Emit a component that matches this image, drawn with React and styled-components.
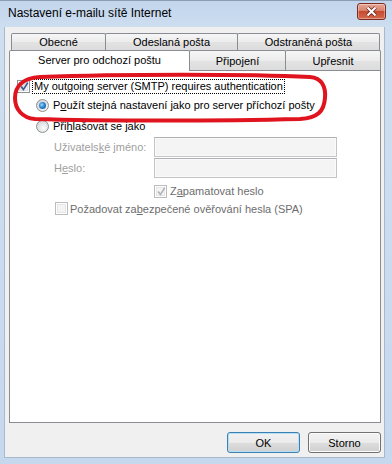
import React from "react";
import styled, { createGlobalStyle } from "styled-components";

const Global = createGlobalStyle`
  html, body {
    margin: 0;
    padding: 0;
  }
  body {
    width: 392px;
    height: 464px;
    overflow: hidden;
    font-family: "Liberation Sans", Arial, sans-serif;
    font-size: 11px;
    color: #000;
  }
`;

const Window = styled.div`
  position: relative;
  width: 392px;
  height: 464px;
  box-sizing: border-box;
  padding: 0 7px 6px 4px;
  display: flex;
  flex-direction: column;
  background: linear-gradient(#c2d5ec, #cfdff1 30px, #c6d8ee);
  border-top: 1px solid #8a9db5;
`;

const TitleBar = styled.div`
  height: 26px;
  display: flex;
  align-items: center;
  justify-content: space-between;
  padding: 0 0 0 4px;
`;

const Title = styled.span`
  font-size: 12px;
  margin-top: -2px;
`;

const CloseButton = styled.div`
  width: 29px;
  height: 17px;
  margin: -5px -1px 0 0;
  box-sizing: border-box;
  border: 1px solid #7a2b22;
  border-radius: 3px;
  background: linear-gradient(#e7a999, #d98069 45%, #c64a30 50%, #d46b4d);
  box-shadow: inset 0 0 0 1px rgba(255, 255, 255, 0.35);
  display: flex;
  align-items: center;
  justify-content: center;
`;

const Client = styled.div`
  flex: 1;
  background: #f0f0f0;
  border-left: 1px solid #a9b9cc;
  border-right: 1px solid #a9b9cc;
  border-bottom: 1px solid #a9b9cc;
  padding-top: 6px;
  display: flex;
  flex-direction: column;
`;

const TabRow = styled.div`
  display: flex;
  align-items: flex-start;
  height: ${(p) => p.$h}px;
  margin-left: ${(p) => p.$indent}px;
`;

const Tab = styled.div`
  box-sizing: border-box;
  width: ${(p) => p.$w}px;
  height: ${(p) => (p.$active ? p.$h + 1 : p.$h)}px;
  margin-left: -1px;
  &:first-child {
    margin-left: 0;
  }
  border: 1px solid #898c95;
  border-bottom: none;
  border-radius: 2px 2px 0 0;
  background: ${(p) =>
    p.$active ? "#fff" : "linear-gradient(#f6f6f6, #ececec 50%, #e3e3e3 51%, #dcdcdc)"};
  position: relative;
  z-index: ${(p) => (p.$active ? 2 : 0)};
  display: flex;
  align-items: center;
  justify-content: center;
  padding-bottom: ${(p) => (p.$active ? 3 : 0)}px;
`;

const Panel = styled.div`
  position: relative;
  z-index: 1;
  box-sizing: border-box;
  width: 372px;
  height: 353px;
  margin-left: 4px;
  border: 1px solid #898c95;
  background: #fff;
  padding-top: 8px;
  display: flex;
  flex-direction: column;
`;

const Row = styled.div`
  display: flex;
  align-items: center;
  height: ${(p) => p.$h}px;
  margin-top: ${(p) => p.$top || 0}px;
  padding-left: ${(p) => p.$indent}px;
  gap: ${(p) => (p.$gap != null ? p.$gap : 4)}px;
`;

const Label = styled.span`
  color: ${(p) => p.$color || "#000"};
  white-space: nowrap;
  ${(p) => p.$width && `width: ${p.$width}px;`}
  ${(p) =>
    p.$focus &&
    `outline: 1px dotted #000; outline-offset: 0; padding: 0 1px; line-height: 13px;`}
`;

const Box = styled.span`
  position: relative;
  flex: none;
  box-sizing: border-box;
  width: 13px;
  height: 13px;
  border: 1px solid ${(p) => (p.$disabled ? "#bcbcbc" : "#8e8f8f")};
  background: #fff;
  &::before {
    content: "";
    position: absolute;
    inset: 1px;
    background: ${(p) =>
      p.$disabled ? "#f4f4f4" : "linear-gradient(135deg, #cdd0d5, #f7f7f7)"};
    border: 1px solid ${(p) => (p.$disabled ? "#e6e6e6" : "#dcdfe4")};
    box-sizing: border-box;
  }
  svg {
    position: absolute;
    left: 1px;
    top: 0;
    z-index: 1;
  }
`;

const Radio = styled.span`
  position: relative;
  flex: none;
  box-sizing: border-box;
  width: 13px;
  height: 13px;
  border-radius: 50%;
  border: 1px solid #8e8f8f;
  background: radial-gradient(circle at 60% 65%, #fcfcfc, #d8dade 70%, #cfd2d6);
  &::after {
    content: "";
    display: ${(p) => (p.$checked ? "block" : "none")};
    position: absolute;
    left: 2px;
    top: 2px;
    width: 7px;
    height: 7px;
    border-radius: 50%;
    background: radial-gradient(circle at 40% 40%, #a8d8fb, #2a85cf 45%, #0d4f8f);
  }
`;

const Field = styled.div`
  box-sizing: border-box;
  width: 183px;
  height: 20px;
  border: 1px solid #c2c4c7;
  border-top-color: #aeb0b3;
  background: #f4f4f4;
  box-shadow: inset 0 0 0 1px #fafafa;
`;

const Footer = styled.div`
  display: flex;
  justify-content: flex-end;
  gap: 8px;
  margin-top: 9px;
  padding-right: 3px;
`;

const Button = styled.button`
  box-sizing: border-box;
  width: 73px;
  height: 21px;
  padding: 0;
  font-family: inherit;
  font-size: 11px;
  font-weight: 400;
  color: #000;
  border: 1px solid ${(p) => (p.$default ? "#3c7fb1" : "#707070")};
  border-radius: 3px;
  background: linear-gradient(#f2f2f2, #ebebeb 50%, #dddddd 51%, #cfcfcf);
  box-shadow: inset 0 0 0 1px ${(p) => (p.$default ? "#b5e0f8" : "#fbfbfb")};
`;

const Overlay = styled.svg`
  position: absolute;
  left: 0;
  top: 0;
  z-index: 5;
  pointer-events: none;
`;

const Check = ({ color }) => (
  <svg width="11" height="11" viewBox="0 0 11 11">
    <path d="M2.2 5.6 L4.4 8.6 L8.8 1.6" fill="none" stroke={color} strokeWidth="1.7" />
  </svg>
);

export default function App() {
  return (
    <>
      <Global />
      <Window>
        <TitleBar>
          <Title>Nastavení e-mailu sítě Internet</Title>
          <CloseButton>
            <svg width="13" height="11" viewBox="0 0 13 11">
              <path d="M2.5 1.5 L10.5 9.5 M10.5 1.5 L2.5 9.5" stroke="#5a1a12" strokeWidth="3.6" />
              <path d="M2.5 1.5 L10.5 9.5 M10.5 1.5 L2.5 9.5" stroke="#fff" strokeWidth="2.2" />
            </svg>
          </CloseButton>
        </TitleBar>
        <Client>
          <TabRow $h={17} $indent={6}>
            <Tab $w={95} $h={17}>Obecné</Tab>
            <Tab $w={133} $h={17}>Odeslaná pošta</Tab>
            <Tab $w={143} $h={17}>Odstraněná pošta</Tab>
          </TabRow>
          <TabRow $h={20} $indent={4}>
            <Tab $w={181} $h={20} $active>
              Server pro odchozí poštu
            </Tab>
            <Tab $w={97} $h={20}>Připojení</Tab>
            <Tab $w={96} $h={20}>Upřesnit</Tab>
          </TabRow>
          <Panel>
            <Row $h={15} $indent={7} $gap={3}>
              <Box>
                <Check color="#3d5a8c" />
              </Box>
              <Label $focus>My outgoing server (SMTP) requires authentication</Label>
            </Row>
            <Row $h={14} $top={4} $indent={26}>
              <Radio $checked />
              <Label>
                P<u>o</u>užít stejná nastavení jako pro server příchozí pošty
              </Label>
            </Row>
            <Row $h={14} $top={7} $indent={26}>
              <Radio />
              <Label>
                Při<u>h</u>lašovat se jako
              </Label>
            </Row>
            <Row $h={20} $top={4} $indent={44} $gap={0}>
              <Label $color="#a0a0a0" $width={100}>
                Uživatels<u>k</u>é jméno:
              </Label>
              <Field />
            </Row>
            <Row $h={20} $top={1} $indent={44} $gap={0}>
              <Label $color="#a0a0a0" $width={100}>
                H<u>e</u>slo:
              </Label>
              <Field />
            </Row>
            <Row $h={14} $top={6} $indent={144} $gap={3}>
              <Box $disabled>
                <Check color="#b4b4b4" />
              </Box>
              <Label $color="#6d6d6d">
                Z<u>a</u>pamatovat heslo
              </Label>
            </Row>
            <Row $h={15} $top={3} $indent={45} $gap={2}>
              <Box $disabled />
              <Label $color="#6d6d6d">
                Požadovat za<u>b</u>ezpečené ověřování hesla (SPA)
              </Label>
            </Row>
          </Panel>
          <Footer>
            <Button $default>OK</Button>
            <Button>Storno</Button>
          </Footer>
        </Client>
        <Overlay width="392" height="464" viewBox="0 0 392 464">
          <path
            d="M40 76 C120 73 250 73 310 76 C322 77 326 86 325 97 C324 110 318 117 300 118 C220 120 100 120 35 118 C22 117 15 108 15 97 C15 86 22 77 40 76 Z"
            fill="none"
            stroke="#e0141f"
            strokeWidth="4"
          />
        </Overlay>
      </Window>
    </>
  );
}
